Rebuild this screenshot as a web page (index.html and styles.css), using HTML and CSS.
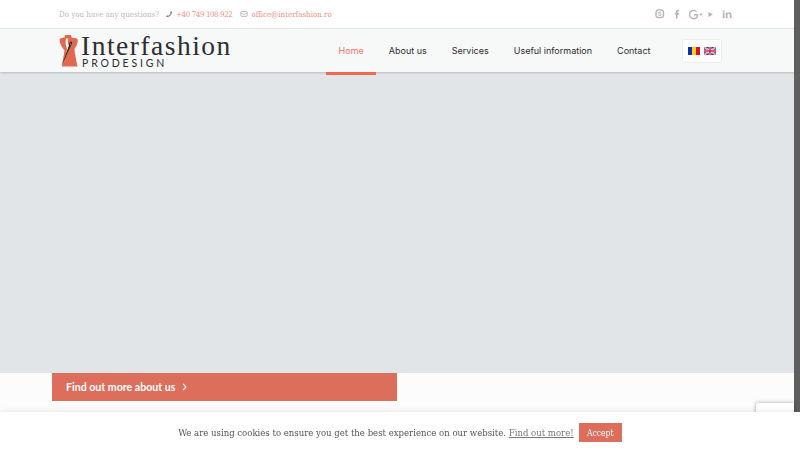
FILE: index.html
```html
<!DOCTYPE html>
<html lang="en">
<head>
<meta charset="utf-8">
<title>Interfashion Prodesign</title>
<link rel="stylesheet" href="styles.css">
</head>
<body>
<div class="page">
  <div class="topbar">
    <span class="question">Do you have any questions?</span>
    <span class="contact">
      <svg class="ci" viewBox="0 0 10 10"><path d="M7.6 1.2 9 2.4C8.6 6 6 8.600 2.400 9.200L1.200 7.800 3 6.600 3.900 7.200C5.200 6.500 6.300 5.300 6.900 4L6.300 3.100Z" fill="#8a8a8a"/></svg>
      <span class="accent phone">+40 749 108 922</span>
    </span>
    <span class="contact">
      <svg class="ci" viewBox="0 0 10 10"><rect x="1" y="2" width="8" height="6" rx="1" fill="none" stroke="#a5a5a5" stroke-width=".9"/><path d="M1 3.500 5 5.800 9 3.500" fill="none" stroke="#a5a5a5" stroke-width=".8"/></svg>
      <span class="accent">office@interfashion.ro</span>
    </span>
    <span class="social">
      <svg class="si skype" viewBox="0 0 10 10"><rect x="1" y="1" width="8" height="8" rx="3" fill="none" stroke="#b4b4b4" stroke-width="1.400"/><path d="M6.600 3.600C6 2.900 3.600 2.900 3.600 4 3.600 5.300 6.500 4.700 6.500 6 6.500 7.100 4 7.100 3.300 6.300" fill="none" stroke="#b4b4b4" stroke-width="1"/></svg>
      <svg class="si fb" viewBox="0 0 10 10"><path d="M6.800 1H5.500C4.500 1 4 1.700 4 2.600V4H2.900V5.400H4V9.500H5.600V5.400H6.800L7 4H5.600V3C5.600 2.600 5.800 2.400 6.100 2.400H6.900Z" fill="#b4b4b4"/></svg>
      <svg class="gp" viewBox="0 0 14 10"><path d="M8 2.300C7.400 1.500 6.500 1.100 5.400 1.100 3.200 1.100 1.400 2.800 1.400 5S3.200 8.900 5.400 8.900C7.600 8.900 8.900 7.400 8.900 5.200H5.400" fill="none" stroke="#b4b4b4" stroke-width="1.300"/><path d="M10.800 5H13.200M12 3.800V6.200" stroke="#b4b4b4" stroke-width="1"/></svg>
      <svg class="si play" viewBox="0 0 10 10"><path d="M2 1.500 8.500 5 2 8.500Z" fill="#b4b4b4"/></svg>
      <svg class="si" viewBox="0 0 10 10"><path d="M.8 3.500H2.500V9.300H.8ZM.7 1.500H2.600V2.800H.7ZM3.800 3.500H5.400V4.300C5.900 3.600 6.600 3.300 7.300 3.300 8.800 3.300 9.500 4.200 9.500 5.800V9.300H7.800V6.100C7.800 5.300 7.500 4.800 6.800 4.800 6 4.800 5.500 5.300 5.500 6.200V9.300H3.800Z" fill="#b4b4b4"/></svg>
    </span>
  </div>
  <header class="header">
    <a class="logo">
      <svg class="mark" viewBox="3 2 19 32">
        <path d="M9 2H15L15.500 4.500 21 5.500 21.800 7C21.800 10 20.500 13 18.500 16 18.500 21 20.500 28 21.500 33.500H6C6.500 27 8 22 8.500 17.500 6 14 3.800 11 3.500 7L4 5.500 8.500 4.500Z" fill="#e0694e"/>
        <path d="M10 5.500C9 9.500 10 13.500 11 15.500L10 23 13 13C11.800 11 11.500 8 12 5.500Z" fill="#f7f8f8"/>
        <path d="M15 8.500C13 9 12.500 11.500 13 12.500L5.500 33 12 19 15.500 11.800C16.500 10 16.200 8.300 15 8.500Z" fill="#2e2e30"/>
        <path d="M14.500 10 13.800 12.500 14.900 11Z" fill="#f7f8f8"/>
      </svg>
      <span class="logotext">
        <span class="logoname">Interfashion</span>
        <span class="logosub">PRODESIGN</span>
      </span>
    </a>
    <nav class="nav">
      <a class="navitem active">Home</a>
      <a class="navitem">About us</a>
      <a class="navitem">Services</a>
      <a class="navitem">Useful information</a>
      <a class="navitem">Contact</a>
    </nav>
    <div class="flags">
      <svg class="flag" viewBox="0 0 12 8"><rect width="4" height="8" fill="#0a2fb4"/><rect x="4" width="4" height="8" fill="#fcd116"/><rect x="8" width="4" height="8" fill="#dc1126"/></svg>
      <svg class="flag" viewBox="0 0 12 8"><rect width="12" height="8" fill="#2a3a8c"/><path d="M0 0 12 8M12 0 0 8" stroke="#fff" stroke-width="1.600"/><path d="M0 0 12 8M12 0 0 8" stroke="#d0213a" stroke-width=".6"/><path d="M6 0V8M0 4H12" stroke="#fff" stroke-width="2.600"/><path d="M6 0V8M0 4H12" stroke="#d0213a" stroke-width="1.400"/></svg>
    </div>
  </header>
  <div class="hero"></div>
  <section class="below">
    <a class="cta">Find out more about us
      <svg class="chev" viewBox="0 0 6 10"><path d="M1.200 1.200 4.800 5 1.200 8.800" fill="none" stroke="#fff" stroke-width="1.400"/></svg>
    </a>
  </section>
</div>
<div class="scrollbar"></div>
<div class="recaptcha"></div>
<div class="cookie">
  <span>We are using cookies to ensure you get the best experience on our website. <a class="more">Find out more!</a></span>
  <a class="accept">Accept</a>
</div>
</body>
</html>
```
FILE: styles.css
```css
* { box-sizing: border-box; }
html, body { margin: 0; height: 450px; overflow: hidden; }
body { display: flex; background: #fff; font-family: "DejaVu Serif Condensed", "DejaVu Serif", "Liberation Serif", serif; }
.page { flex: 1; min-width: 0; display: flex; flex-direction: column; }
.scrollbar { width: 6px; background: #5f5f5f; }

.topbar { height: 29px; flex: none; display: flex; align-items: center; padding: 0 62px 0 59px; border-bottom: 1px solid #e6e8e8; font-size: 7.900px; color: #b9b9b9; }
.question { margin-right: 6px; }
.contact { display: flex; align-items: center; gap: 3px; margin-right: 8px; }
.ci { width: 8px; height: 8px; }
.accent { color: #ec8f7e; }
.phone { letter-spacing: -.4px; }
.social { margin-left: auto; display: flex; align-items: center; gap: 9px; }
.si { width: 10px; height: 10px; display: block; }
.skype { width: 9.500px; height: 9.500px; }
.fb { margin-left: -1.500px; }
.gp { width: 15px; height: 11px; display: block; margin-left: -3px; }
.play { width: 7px; height: 7px; margin: 0 -1px 0 -5px; }

.header { height: 43px; flex: none; display: flex; align-items: center; padding: 0 72px 0 59px; background: #f7f8f8; box-shadow: 0 1px 2px rgba(0,0,0,.18); position: relative; z-index: 1; }
.logo { display: flex; align-items: center; gap: 3px; }
.mark { width: 19px; height: 32px; display: block; }
.logotext { display: flex; flex-direction: column; color: #2e2e30; }
.logoname { font-family: "Liberation Serif", serif; font-size: 27.500px; line-height: 24px; letter-spacing: 1.500px; }
.logosub { font-family: Lato, sans-serif; font-size: 10.500px; line-height: 10px; letter-spacing: 2.850px; margin-left: 1px; }
.nav { display: flex; margin-left: auto; height: 100%; }
.navitem { padding: 0 12.500px; display: flex; align-items: center; font-family: Inter, sans-serif; font-size: 9px; color: #2d2d2d; height: 46px; border-bottom: 3px solid transparent; }
.navitem.active { color: #f2775f; border-bottom-color: #ee6a52; }
.flags { margin-left: 19px; width: 40px; height: 24px; background: #fff; border: 1px solid #eceeee; border-radius: 3px; display: flex; align-items: center; justify-content: center; gap: 4px; }
.flag { width: 12px; height: 8px; display: block; }

.hero { height: 301px; flex: none; background: #e1e5e8; }
.below { flex: 1; background: #fcfcfc; padding-left: 52px; }
.cta { width: 345px; height: 28px; background: #dc6e5b; color: #fff; display: flex; align-items: center; gap: 7px; padding: 0 0 1px 14px; font-family: Lato, sans-serif; font-weight: 700; font-size: 10.600px; }
.chev { width: 5px; height: 8px; display: block; }

.recaptcha { position: fixed; left: 756px; top: 403px; width: 38px; height: 20px; background: #fff; box-shadow: 0 0 4px rgba(0,0,0,.35); border-radius: 2px 0 0 0; }
.cookie { position: fixed; left: 0; right: 0; bottom: 0; height: 38px; background: #fff; box-shadow: 0 0 6px rgba(0,0,0,.12); display: flex; align-items: center; justify-content: center; gap: 5px; padding-top: 3px; font-size: 9.500px; color: #555; }
.more { text-decoration: underline; color: #777; }
.accept { background: #dc6e5b; color: #fff; height: 19px; width: 43px; display: flex; align-items: center; justify-content: center; font-size: 8.500px; }
```
